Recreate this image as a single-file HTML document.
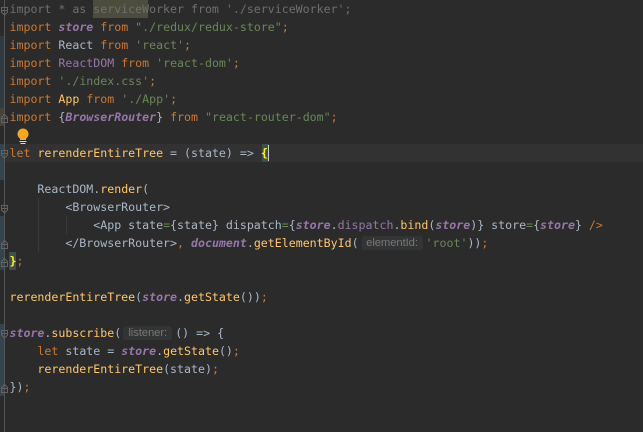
<!DOCTYPE html>
<html>
<head>
<meta charset="utf-8">
<style>
html,body{margin:0;padding:0;background:#2b2b2b;}
#w{position:relative;width:643px;height:432px;overflow:hidden;background:#2b2b2b;font-family:"DejaVu Sans Mono","Liberation Mono",monospace;font-size:11.6px;filter:blur(0.3px);}
.l{position:absolute;left:9.500px;height:18px;line-height:18px;white-space:pre;color:#a9b7c6;}
.k{color:#cc7832}.s{color:#6a8759}.g{color:#ffc66d}.p{color:#9876aa}
.i{font-style:italic;font-weight:bold;color:#9876aa}
.r{position:absolute}
.h{display:inline-block;font-family:"Liberation Sans",sans-serif;font-size:11.300px;letter-spacing:-0.1px;color:#787878;background:#333435;border-radius:3px;height:14px;line-height:14px;text-align:center;vertical-align:1px;}
svg{position:absolute;left:0;top:0}
</style>
</head>
<body>
<div id="w">
<div class="r" style="left:0;top:144px;width:643px;height:18px;background:#323232"></div>
<div class="r" style="left:0;top:36px;width:4px;height:72px;background:#2f3b42"></div>
<div class="r" style="left:0;top:108px;width:4px;height:18px;background:#45433a"></div>
<div class="r" style="left:0;top:144px;width:4px;height:36px;background:#33444f"></div>
<div class="r" style="left:0;top:216px;width:4px;height:54px;background:#33444f"></div>
<div class="r" style="left:0;top:324px;width:4px;height:72px;background:#33444f"></div>
<div class="r" style="left:4px;top:0;width:1px;height:432px;background:#555"></div>
<div class="r" style="left:93px;top:0;width:55px;height:18px;background:#4c4d3c"></div>
<div class="r" style="left:262px;top:144px;width:7px;height:18px;background:#3b514d"></div>
<div class="r" style="left:9px;top:252px;width:7px;height:18px;background:#3b514d"></div>
<div class="r" style="left:268px;top:145px;width:1px;height:16px;background:#d0d0d0"></div>
<div class="r" style="left:38px;top:198px;width:1px;height:54px;background:#3a3a3a"></div>
<div class="r" style="left:66px;top:216px;width:1px;height:18px;background:#3a3a3a"></div>

<svg width="643" height="432" fill="none" stroke="#636363" stroke-width="1">
<path d="M1.500 7.500h6v4.500l-3 3l-3-3z"/><path d="M1.500 10.500h6"/>
<path d="M1.500 122.500v-5l3-3l3 3v5z"/><path d="M1.500 118.500h6"/>
<path d="M1.500 150.500h6v4.500l-3 3l-3-3z"/><path d="M1.500 153.500h6"/>
<path d="M1.500 205.500h6v4.500l-3 3l-3-3z"/><path d="M1.500 208.500h6"/>
<path d="M1.500 248.500v-5l3-3l3 3v5z"/><path d="M1.500 244.500h6"/>
<path d="M1.500 266.500v-5l3-3l3 3v5z"/><path d="M1.500 262.500h6"/>
<path d="M1.500 330.500h6v4.500l-3 3l-3-3z"/><path d="M1.500 333.500h6"/>
<path d="M1.500 392.500v-5l3-3l3 3v5z"/><path d="M1.500 388.500h6"/>
<circle cx="23" cy="134" r="5.500" fill="#f5a623" stroke="none"/>
<path d="M20 138h6v2h-6z" fill="#f5a623" stroke="none"/>
<path d="M19.500 141.500h7M20.500 143.500h5" stroke="#d8d8d8"/>
</svg>

<div class="l" style="top:0;color:#6f6f6f">import * as serviceWorker from './serviceWorker';</div>
<div class="l" style="top:18px"><span class="k">import</span> <span class="i">store</span> <span class="k">from</span> <span class="s">"./redux/redux-store"</span><span class="k">;</span></div>
<div class="l" style="top:36px"><span class="k">import</span> React <span class="k">from</span> <span class="s">'react'</span><span class="k">;</span></div>
<div class="l" style="top:54px"><span class="k">import</span> <span class="p">ReactDOM</span> <span class="k">from</span> <span class="s">'react-dom'</span><span class="k">;</span></div>
<div class="l" style="top:72px"><span class="k">import</span> <span class="s">'./index.css'</span><span class="k">;</span></div>
<div class="l" style="top:90px"><span class="k">import</span> <span class="g">App</span> <span class="k">from</span> <span class="s">'./App'</span><span class="k">;</span></div>
<div class="l" style="top:108px"><span class="k">import</span> {<span class="i">BrowserRouter</span>} <span class="k">from</span> <span class="s">"react-router-dom"</span><span class="k">;</span></div>
<div class="l" style="top:144px"><span class="k">let</span> <span class="g">rerenderEntireTree</span> = (state) =&gt; <span style="color:#ffef28;font-weight:bold">{</span></div>
<div class="l" style="top:180px">    ReactDOM.<span class="g">render</span>(</div>
<div class="l" style="top:198px">        &lt;BrowserRouter&gt;</div>
<div class="l" style="top:216px">            &lt;App state<span class="s">=</span>{state} dispatch<span class="s">=</span>{<span class="i">store</span>.<span class="p">dispatch</span>.<span class="g">bind</span>(<span class="i">store</span>)} store<span class="s">=</span>{<span class="i">store</span>} <span class="k">/&gt;</span></div>
<div class="l" style="top:234px">        &lt;/BrowserRouter&gt;<span class="k">,</span> <span class="i">document</span>.<span class="g">getElementById</span>(<span class="h" style="width:61px;margin:0 3px 0 3px">elementId:</span><span class="s">'root'</span>))<span class="k">;</span></div>
<div class="l" style="top:252px"><span style="color:#ffef28;font-weight:bold">}</span><span class="k">;</span></div>
<div class="l" style="top:288px"><span class="g">rerenderEntireTree</span>(<span class="i">store</span>.<span class="g">getState</span>())<span class="k">;</span></div>
<div class="l" style="top:324px"><span class="i">store</span>.<span class="g">subscribe</span>(<span class="h" style="width:49px;margin:0 3px 0 2px">listener:</span>() =&gt; {</div>
<div class="l" style="top:342px">    <span class="k">let</span> state = <span class="i">store</span>.<span class="g">getState</span>()<span class="k">;</span></div>
<div class="l" style="top:360px">    <span class="g">rerenderEntireTree</span>(state)<span class="k">;</span></div>
<div class="l" style="top:378px">})<span class="k">;</span></div>
</div>
</body>
</html>
